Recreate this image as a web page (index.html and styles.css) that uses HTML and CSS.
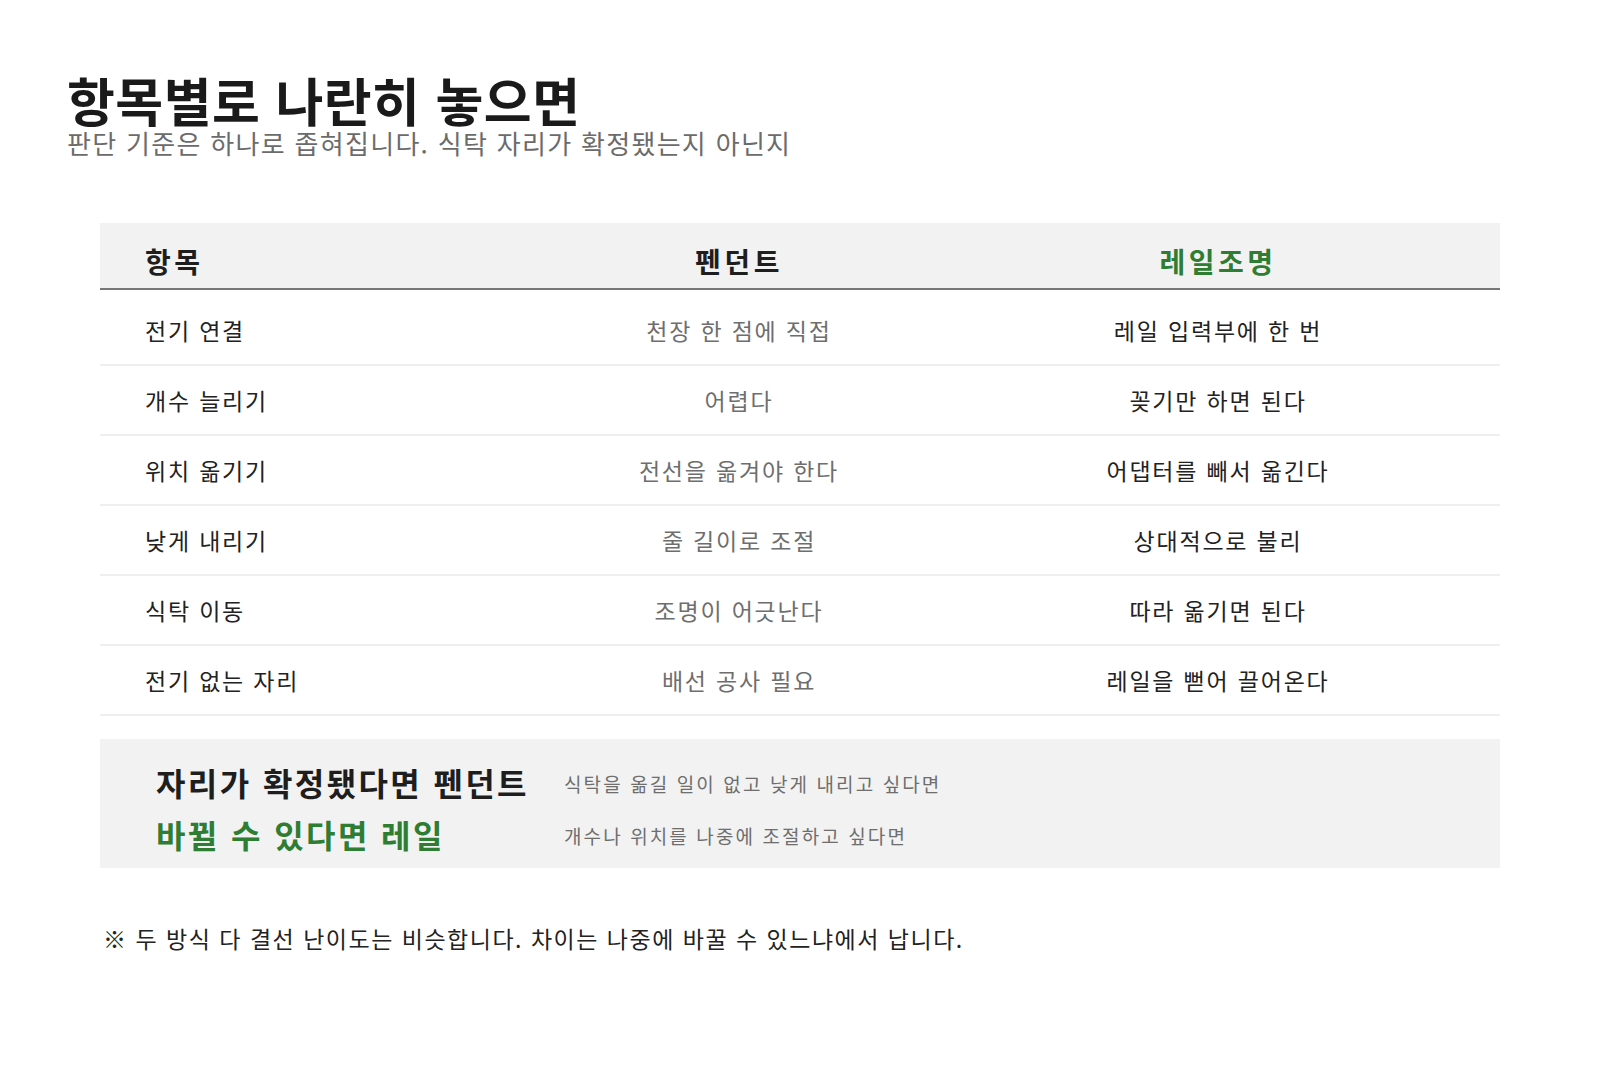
FILE: index.html
```html
<!DOCTYPE html>
<html lang="ko">
<head>
<meta charset="utf-8">
<title>항목별로 나란히 놓으면</title>
<link rel="stylesheet" href="styles.css">
</head>
<body>
<main class="page">
  <h1 class="title">항목별로 나란히 놓으면</h1>
  <p class="subtitle">판단 기준은 하나로 좁혀집니다. 식탁 자리가 확정됐는지 아닌지</p>

  <table class="compare">
    <colgroup>
      <col class="c1"><col class="c2"><col class="c3">
    </colgroup>
    <thead>
      <tr>
        <th class="col-item">항목</th>
        <th class="col-mid">펜던트</th>
        <th class="col-rail">레일조명</th>
      </tr>
    </thead>
    <tbody>
      <tr><td class="col-item">전기 연결</td><td class="col-mid">천장 한 점에 직접</td><td class="col-rail">레일 입력부에 한 번</td></tr>
      <tr><td class="col-item">개수 늘리기</td><td class="col-mid">어렵다</td><td class="col-rail">꽂기만 하면 된다</td></tr>
      <tr><td class="col-item">위치 옮기기</td><td class="col-mid">전선을 옮겨야 한다</td><td class="col-rail">어댑터를 빼서 옮긴다</td></tr>
      <tr><td class="col-item">낮게 내리기</td><td class="col-mid">줄 길이로 조절</td><td class="col-rail">상대적으로 불리</td></tr>
      <tr><td class="col-item">식탁 이동</td><td class="col-mid">조명이 어긋난다</td><td class="col-rail">따라 옮기면 된다</td></tr>
      <tr><td class="col-item">전기 없는 자리</td><td class="col-mid">배선 공사 필요</td><td class="col-rail">레일을 뻗어 끌어온다</td></tr>
    </tbody>
  </table>

  <section class="summary">
    <div class="sum-row">
      <strong class="sum-head">자리가 확정됐다면 펜던트</strong>
      <span class="sum-desc">식탁을 옮길 일이 없고 낮게 내리고 싶다면</span>
    </div>
    <div class="sum-row">
      <strong class="sum-head green">바뀔 수 있다면 레일</strong>
      <span class="sum-desc">개수나 위치를 나중에 조절하고 싶다면</span>
    </div>
  </section>

  <p class="note">※ 두 방식 다 결선 난이도는 비슷합니다. 차이는 나중에 바꿀 수 있느냐에서 납니다.</p>
</main>
</body>
</html>
```

FILE: styles.css
```css
* { box-sizing: border-box; }

html, body {
  margin: 0;
  padding: 0;
  background: #ffffff;
}

body {
  font-family: "Noto Sans CJK KR", "Noto Sans", sans-serif;
  color: #222222;
}

.page {
  padding: 72px 67px 0 67px;
}

.title {
  margin: 0;
  font-size: 52px;
  line-height: 56px;
  font-weight: 700;
  color: #1a1a1a;
  letter-spacing: 0.5px;
}

.subtitle {
  margin: 0;
  font-size: 26px;
  line-height: 30px;
  color: #6b6b6b;
  letter-spacing: 1.3px;
}

.compare {
  margin: 65px 0 0 33px;
  width: 1400px;
  border-collapse: collapse;
  table-layout: fixed;
}

.c1 { width: 442px; }
.c2 { width: 394px; }
.c3 { width: 564px; }

.compare thead tr {
  background: #f2f2f2;
  border-bottom: 2px solid #777777;
}

.compare th {
  height: 66px;
  padding: 10px 0 0 0;
  font-size: 28px;
  line-height: 32px;
  font-weight: 700;
  color: #1e1e1e;
  letter-spacing: 3.5px;
}

.compare td {
  height: 70px;
  padding: 0;
  font-size: 23px;
  line-height: 30px;
  color: #222222;
  border-bottom: 2px solid #efefef;
  letter-spacing: 1.8px;
}

.compare tbody tr:first-child td {
  height: 76px;
  padding-top: 6px;
}

.col-item {
  text-align: left;
  padding-left: 45px !important;
}

.col-mid {
  text-align: center;
}

td.col-mid {
  color: #6e6e6e;
}

.col-rail {
  text-align: center;
}

th.col-rail {
  color: #2e7d32;
}

.summary {
  margin: 23px 0 0 33px;
  width: 1400px;
  height: 129px;
  background: #f2f2f2;
  padding: 20px 56px 0 56px;
  display: flex;
  flex-direction: column;
  gap: 6px;
}

.sum-row {
  display: flex;
  align-items: center;
  height: 46px;
}

.sum-head {
  width: 408px;
  flex: none;
  font-size: 32px;
  line-height: 46px;
  font-weight: 700;
  color: #1e1e1e;
  letter-spacing: 2.4px;
}

.sum-head.green {
  color: #2e7d32;
}

.sum-desc {
  font-size: 19px;
  line-height: 24px;
  color: #6e6e6e;
  padding-top: 4px;
  letter-spacing: 2.1px;
}

.note {
  margin: 54px 0 0 36px;
  font-size: 23px;
  line-height: 32px;
  color: #222222;
  letter-spacing: 1.5px;
}
```
